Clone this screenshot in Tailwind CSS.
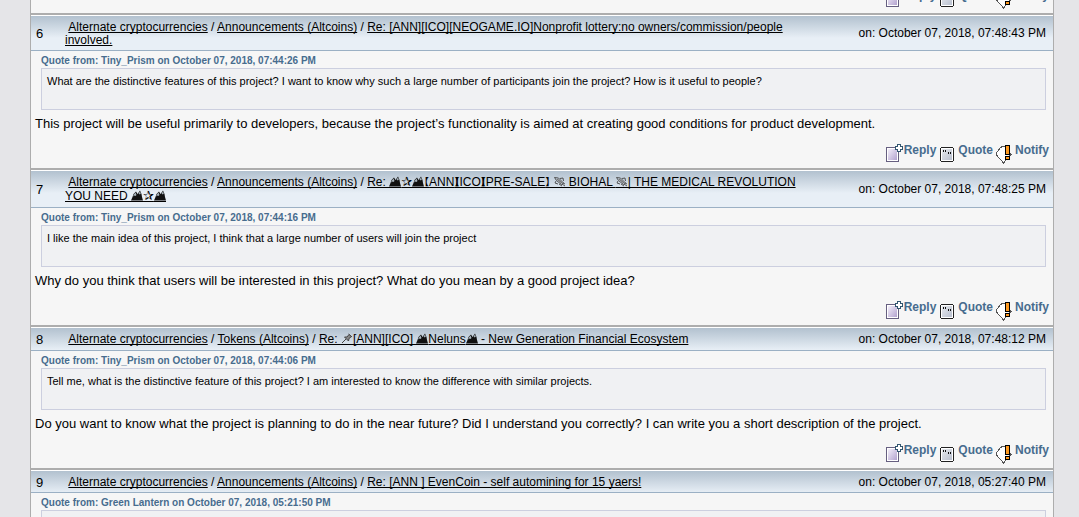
<!DOCTYPE html>
<html lang="en">
<head>
  <meta charset="UTF-8">
  <meta name="viewport" content="width=device-width, initial-scale=1.0">
  <title>Recent Posts</title>
  <script src="https://cdn.jsdelivr.net/npm/@tailwindcss/browser@4"></script>
</head>
<body class="h-screen overflow-hidden bg-[#e5e5e8] pr-[25px] pl-[30px] font-['Liberation_Sans',Arial,'DejaVu_Sans','Noto_Sans_CJK_SC',sans-serif] text-black">

  <!-- Shared icons -->
  <svg class="absolute size-0">
    <symbol id="reply" viewBox="0 0 18 20" shape-rendering="crispEdges">
      <path d="M.5 3.500h12v14h-12z" fill="#fff" stroke="#665f80"/>
      <path d="M2 5h9v11h-9z" fill="url(#lilac)"/>
      <path d="M11 0h4v2h2v4h-2v2h-4v-2h-2v-4h2z" fill="#31556f"/>
      <path d="M12 1h2v2h2v2h-2v2h-2v-2h-2v-2h2z" fill="#fff"/>
    </symbol>
    <symbol id="quote" viewBox="0 0 18 20" shape-rendering="crispEdges">
      <path d="M2 3h12v1h1v13h-1v1h-12v-1h-1v-13h1z" fill="#222"/>
      <path d="M2 4h12v13h-12z" fill="#fff"/>
      <path d="M3 5h10v11h-10z" fill="url(#steel)"/>
      <path d="M4 6h1v2h-1zM6 6h1v2h-1zM9 8h1v2h-1zM11 8h1v2h-1z" fill="#111"/>
    </symbol>
    <symbol id="notify" viewBox="0 0 18 20" shape-rendering="crispEdges">
      <path d="M4.500 3.500l2-1h3l5.500 8-7.500 8.500-7-8v-2z" fill="#fff" stroke="#555"/>
      <path d="M9 1h5v10h-5zM9 12h5v4h-5z" fill="#000"/>
      <path d="M10 2h3v8h-3zM10 13h3v2h-3z" fill="#ff9a1f"/>
    </symbol>
    <symbol id="mountain" viewBox="0 0 12 12">
      <path d="M0 10.500L1.500 7l1-3L5 1.500 6.500 4 9 .5l1.500 3.500.5 3 1 3.500z" fill="#111"/>
      <path d="M2.500 5l2-2.500 1 2.500-1 1-1-.5-1 1zM7.500 3.500l1.500-2 .8 2-1 1z" fill="#a9b5bd"/>
      <path d="M0 11.500h12" stroke="#000"/>
    </symbol>
    <symbol id="rocket" viewBox="0 0 12 12">
      <path d="M.5 1.500l4 .5 5 5-2 1.500-5-4zM2 5l-1 2 3 1M6 2.500l3-.5.5 3M8 8l3 2M5 8l3 2M9 7l2 1" fill="none" stroke="#444" stroke-width=".9"/>
      <path d="M3 3l5 4" stroke="#777" stroke-width="1.500"/>
      <path d="M0 11.500h12" stroke="#000"/>
    </symbol>
    <symbol id="pin" viewBox="0 0 12 12">
      <path d="M1 10l4-4M7.500 1l3.500 3" fill="none" stroke="#444"/>
      <path d="M8 1.500L6 4l-2.500 0 4 4 .5-2.500 2.500-2z" fill="#888" stroke="#444"/>
      <path d="M0 11.500h12" stroke="#000"/>
    </symbol>
    <defs>
      <linearGradient id="lilac" x2="1" y2="1"><stop stop-color="#f3eefa"/><stop offset="1" stop-color="#b3a3cf"/></linearGradient>
      <linearGradient id="steel" x2="1" y2="1"><stop stop-color="#e6e9ee"/><stop offset="1" stop-color="#b9c0cf"/></linearGradient>
    </defs>
  </svg>

  <main id="posts" class="flex h-full flex-col overflow-hidden border-x border-[#adadad] bg-[#f6f6f6]"></main>

  <template id="post">
    <article class="shrink-0 border-t-2 border-[#adadad]">
      <header class="grid grid-cols-[29px_74%_1fr] items-center border-t border-b border-t-white border-b-[#9bb0c4] bg-[linear-gradient(#b2c1cf,#e8eff6_22px)] pt-1 pr-[7px] pb-[3px] pl-[5px]">
        <span data-num class="text-[13px] leading-[13px]"></span>
        <h2 data-subject class="text-[12px] [&_a]:underline [&_a]:[text-decoration-skip-ink:none]"></h2>
        <time data-time class="text-right text-[12px] leading-[13px] whitespace-nowrap"></time>
      </header>
      <div class="h-[117px] px-1 pt-[3px]">
        <a href="#" data-from class="ml-1.5 block text-[10px] leading-[14px] font-bold text-[#476c8e]"></a>
        <blockquote data-quote class="mr-[3px] ml-1.5 h-[42px] border border-[#cccfdf] bg-[#f0f1f3] px-[5px] pt-[5px] text-[11px] leading-[15px]"></blockquote>
        <p data-text class="mt-1.5 min-h-4 text-[13px] leading-[16px] whitespace-nowrap"></p>
        <nav class="mt-2 flex justify-end gap-[3px] text-[12px] leading-[20px] font-bold text-[#476c8e]">
          <a href="#" class="flex"><svg class="mt-1 h-5 w-[18px]"><use href="#reply"/></svg>Reply</a>
          <a href="#" class="flex gap-px"><svg class="mt-1 h-5 w-[18px]"><use href="#quote"/></svg>Quote</a>
          <a href="#" class="flex gap-px"><svg class="mt-1 h-5 w-[18px]"><use href="#notify"/></svg>Notify</a>
        </nav>
      </div>
    </article>
  </template>

<script>
  const icon = name => `<svg class="inline-block size-3 -mb-0.5 align-baseline"><use href="#${name}"/></svg>`;
  const open = '<span class="-ml-[5px] text-[10px] leading-[10px]">【</span>';
  const close = '<span class="-mr-[5px] text-[10px] leading-[10px]">】</span>';
  const mount = icon('mountain');
  const star = mount + '<span class="text-[13px] leading-[10px]">✰</span>' + mount;

  // Subjects with symbols get a taller line
  const plain = ['pt-px', 'leading-[13px]'];
  const symbols = ['pb-px', 'leading-[14px]'];

  const posts = [
    { num: 6, line: plain, board: 'Announcements (Altcoins)', time: '07:48:43 PM',
      title: 'Re: [ANN][ICO][NEOGAME.IO]Nonprofit lottery:no owners/commission/people involved.',
      from: 'Tiny_Prism on October 07, 2018, 07:44:26 PM',
      quote: 'What are the distinctive features of this project? I want to know why such a large number of participants join the project? How is it useful to people?',
      text: 'This project will be useful primarily to developers, because the project’s functionality is aimed at creating good conditions for product development.' },
    { num: 7, line: symbols, board: 'Announcements (Altcoins)', time: '07:48:25 PM',
      title: `Re: ${star}${open}ANN${close}${open}ICO${close}${open}PRE-SALE${close} ${icon('rocket')} BIOHAL ${icon('rocket')}| THE MEDICAL REVOLUTION YOU NEED ${star}`,
      from: 'Tiny_Prism on October 07, 2018, 07:44:16 PM',
      quote: 'I like the main idea of this project, I think that a large number of users will join the project',
      text: 'Why do you think that users will be interested in this project? What do you mean by a good project idea?' },
    { num: 8, line: symbols, board: 'Tokens (Altcoins)', time: '07:48:12 PM',
      title: `Re: ${icon('pin')}[ANN][ICO] ${mount}Neluns${mount} - New Generation Financial Ecosystem`,
      from: 'Tiny_Prism on October 07, 2018, 07:44:06 PM',
      quote: 'Tell me, what is the distinctive feature of this project? I am interested to know the difference with similar projects.',
      text: 'Do you want to know what the project is planning to do in the near future? Did I understand you correctly? I can write you a short description of the project.' },
    { num: 9, line: plain, board: 'Announcements (Altcoins)', time: '05:27:40 PM',
      title: 'Re: [ANN ] EvenCoin - self automining for 15 yaers!',
      from: 'Green Lantern on October 07, 2018, 05:21:50 PM', quote: '', text: '' }
  ];

  const list = document.getElementById('posts');
  const template = document.getElementById('post');

  // Tail of the previous post, only its buttons are in view
  const previous = template.content.cloneNode(true);
  previous.querySelector('header').remove();
  previous.querySelector('[data-from]').textContent = '\u00a0';
  previous.querySelector('article').classList.add('-mt-[106px]');
  list.append(previous);

  posts.forEach(post => {
    const node = template.content.cloneNode(true);
    const subject = node.querySelector('[data-subject]');
    node.querySelector('[data-num]').textContent = post.num;
    subject.classList.add(...post.line);
    subject.innerHTML = `&nbsp;<a href="#">Alternate cryptocurrencies</a> / <a href="#">${post.board}</a> / <a href="#">${post.title}</a>`;
    node.querySelector('[data-time]').textContent = 'on: October 07, 2018, ' + post.time;
    node.querySelector('[data-from]').textContent = 'Quote from: ' + post.from;
    node.querySelector('[data-quote]').textContent = post.quote;
    node.querySelector('[data-text]').textContent = post.text;
    list.append(node);
  });
</script>
</body>
</html>
